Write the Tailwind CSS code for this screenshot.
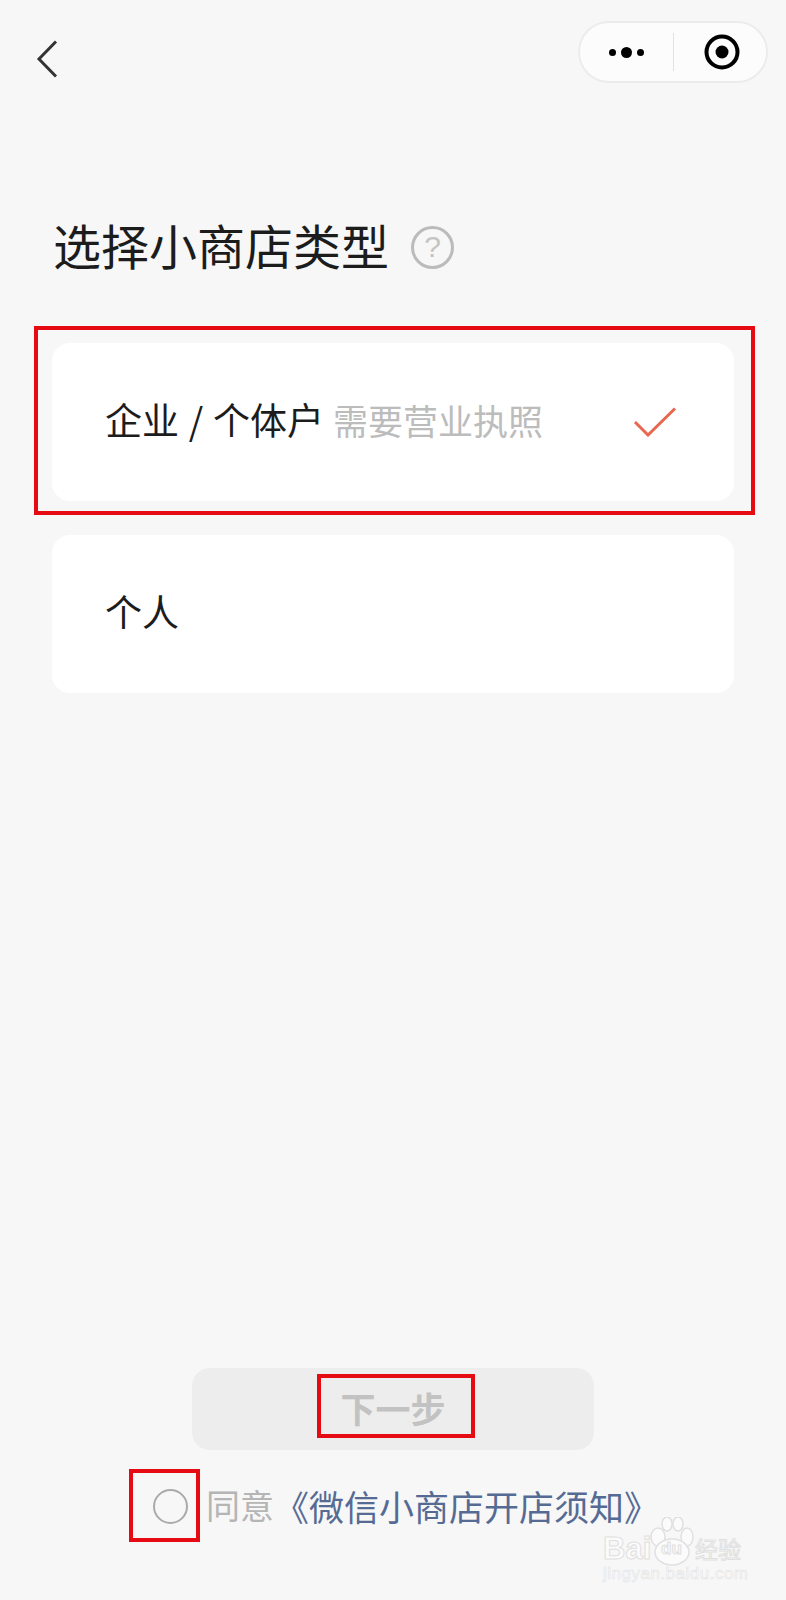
<!DOCTYPE html>
<html lang="zh-CN">
<head>
    <meta charset="UTF-8">
    <meta name="viewport" content="width=device-width, initial-scale=1.0">
    <title>选择小商店类型</title>
    <script src="https://cdn.jsdelivr.net/npm/@tailwindcss/browser@4"></script>
</head>
<body class="bg-[#f7f7f7] font-['Noto_Sans_CJK_SC','Liberation_Sans',sans-serif]">
<div class="relative w-[786px] h-[1600px] overflow-hidden flex flex-col">

    <!-- Top bar -->
    <div class="flex justify-between items-start pt-[21px] pl-[36px] pr-[18px]">
        <svg class="mt-[19px]" width="22" height="38" viewBox="0 0 22 38" fill="none" stroke="#333" stroke-width="3">
            <path d="M20 1.5 L3 19 L20 36.5"/>
        </svg>
        <div class="w-[190px] h-[62px] rounded-full bg-[#fcfcfc] border-2 border-[#ececec] flex items-center">
            <div class="w-[93px] flex justify-center items-center gap-[5px]">
                <span class="w-[7px] h-[7px] rounded-full bg-black"></span>
                <span class="w-[11px] h-[11px] rounded-full bg-black"></span>
                <span class="w-[7px] h-[7px] rounded-full bg-black"></span>
            </div>
            <div class="w-px h-[38px] bg-[#e2e2e2]"></div>
            <div class="flex-1 flex justify-center pl-[3px]">
                <svg width="36" height="36" viewBox="0 0 36 36">
                    <circle cx="18" cy="18" r="15.5" fill="none" stroke="#000" stroke-width="4"/>
                    <circle cx="18" cy="18" r="6.5" fill="#000"/>
                </svg>
            </div>
        </div>
    </div>

    <!-- Title -->
    <div class="flex items-center mt-[136px] pl-[53px] h-[56px]">
        <h1 class="text-[48px] leading-[56px] pb-[6px] font-normal text-[#1c1c1c]">选择小商店类型</h1>
        <div class="ml-[22px] w-[43px] h-[43px] rounded-full border-[3px] border-[#bbbbbb] flex items-center justify-center text-[30px] leading-none text-[#c4c4c4] font-['Liberation_Sans',sans-serif]">?</div>
    </div>

    <!-- Type options -->
    <div class="mt-[68px] mx-[52px] flex flex-col gap-[34px]">
        <div class="relative h-[158px] rounded-[18px] bg-white flex items-center justify-between pl-[53px] pr-[57px]">
            <div class="flex items-center text-[37px] leading-none pb-[6px]">
                <span class="text-[#1c1c1c] [word-spacing:1.5px]">企业 / 个体户</span>
                <span class="ml-[9px] text-[35px] text-[#bcbcbc]">需要营业执照</span>
            </div>
            <svg width="44" height="30" viewBox="0 0 44 30" fill="none" stroke="#e8674f" stroke-width="3">
                <path d="M2 15 L15 28 L42 1.5"/>
            </svg>
            <!-- Annotation box -->
            <div class="absolute -top-[17px] -bottom-[14px] -left-[18px] -right-[21px] border-[4px] border-[#e60b12]"></div>
        </div>
        <div class="h-[158px] rounded-[18px] bg-white flex items-center pl-[53px]">
            <span class="text-[37px] leading-none pb-[6px] text-[#1c1c1c]">个人</span>
        </div>
    </div>

    <!-- Footer -->
    <div class="mt-auto pb-[76px] flex flex-col items-center">
        <div class="relative w-[402px] h-[82px] rounded-[18px] bg-[#ededed] flex items-center justify-center">
            <span class="text-[35px] leading-none pb-[4px] font-bold text-[#c2c2c2]">下一步</span>
            <!-- Annotation box -->
            <div class="absolute left-[125px] top-[6px] w-[158px] h-[64px] border-[4px] border-[#e60b12]"></div>
        </div>
        <div class="relative mt-[38px] self-start ml-[153px] flex items-center h-[36px] text-[34px] leading-none">
            <span class="w-[35px] h-[35px] rounded-full border-2 border-[#aaaaaa]"></span>
            <span class="ml-[18px] pb-[2px] text-[#b5b5b5]">同意</span>
            <span class="pb-[2px] text-[35px] text-[#566b94]">《微信小商店开店须知》</span>
            <!-- Annotation box -->
            <div class="absolute -left-[24px] -top-[19px] w-[71px] h-[73px] border-[4px] border-[#e60b12]"></div>
        </div>
    </div>

    <!-- Baidu watermark -->
    <div class="absolute left-[603px] top-[1517px] w-[142px] h-[64px] text-[#fbfbfb]">
        <svg class="absolute left-[44px] top-0" width="52" height="50" viewBox="0 0 52 50" fill="#fbfbfb" stroke="#e0e0e0" stroke-width="1.5">
            <ellipse cx="11" cy="20" rx="7" ry="9"/>
            <ellipse cx="20" cy="7" rx="5" ry="7"/>
            <ellipse cx="31" cy="7" rx="5" ry="7"/>
            <ellipse cx="40" cy="20" rx="6" ry="9"/>
            <ellipse cx="25" cy="35" rx="17" ry="13"/>
        </svg>
        <div class="relative flex items-center h-[26px] mt-[18px] [-webkit-text-stroke:1px_#e0e0e0]">
            <span class="w-[58px] text-[31px] leading-none font-bold font-['Liberation_Sans',sans-serif]">Bai</span>
            <span class="w-[34px] text-[17px] leading-none font-bold font-['Liberation_Sans',sans-serif]">du</span>
            <span class="text-[23px] leading-none">经验</span>
        </div>
        <div class="relative mt-[5px] text-[17px] leading-[15px] tracking-[0.5px] font-['Liberation_Sans',sans-serif] [-webkit-text-stroke:0.6px_#e4e4e4]">jingyan.baidu.com</div>
    </div>
</div>
</body>
</html>
